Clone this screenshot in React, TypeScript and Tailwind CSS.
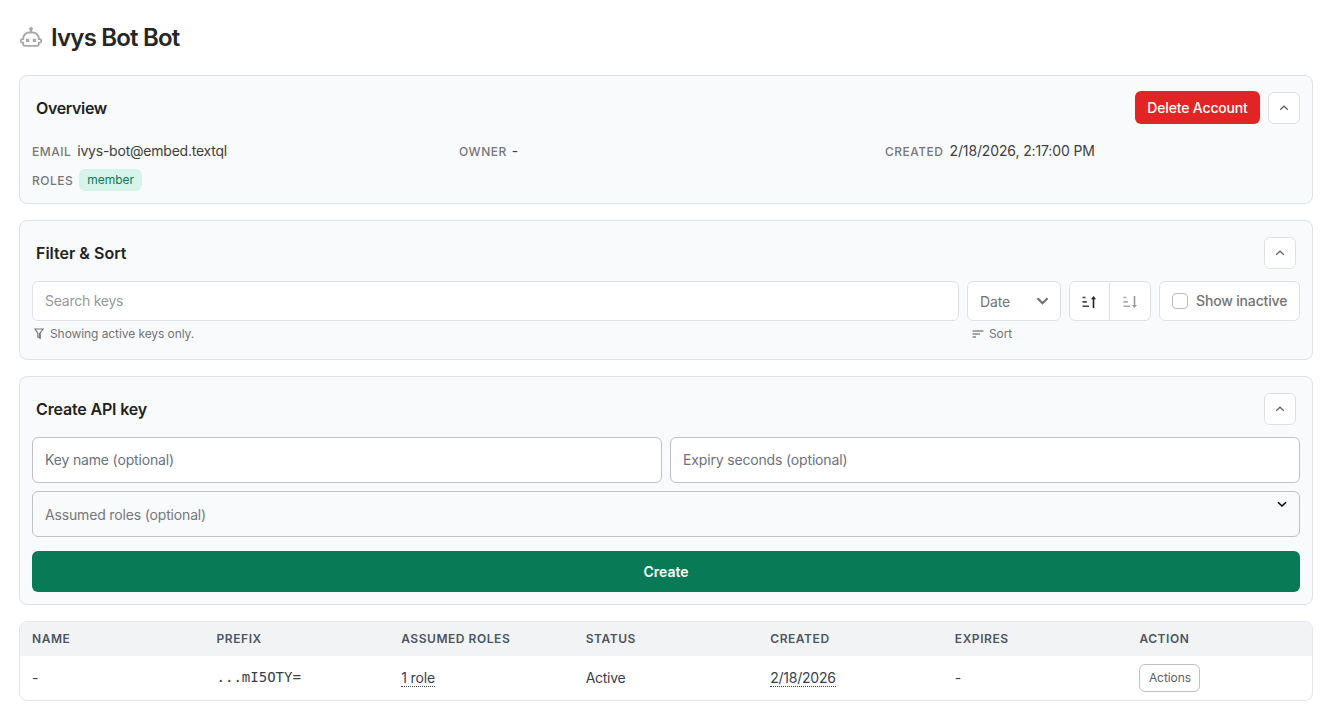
import type { ReactNode } from "react";
import { clsx } from "clsx";

function ChevronUp() {
  return (
    <svg width="10" height="6" viewBox="0 0 10 6" fill="none" stroke="#626262" strokeWidth="1.2">
      <path d="M1.2 4.8 5 1.2l3.8 3.6" />
    </svg>
  );
}

function RobotIcon() {
  return (
    <svg className="mb-0.5" width="22" height="20" viewBox="0 0 22 20" fill="none" stroke="#a8a8a8" strokeWidth="1.8" strokeLinejoin="round">
      <circle cx="11" cy="1.9" r="1.9" fill="#a8a8a8" stroke="none" />
      <path d="M11 2v4" />
      <path d="M9.2 5.5h3.6a6 6 0 0 1 6 6v.7h1.1c.7 0 1.2.5 1.2 1.1v1.2c0 .7-.5 1.2-1.2 1.2h-1.1v1.4c0 1-.8 1.8-1.8 1.8H5c-1 0-1.8-.8-1.8-1.8v-1.4H2.1c-.7 0-1.2-.5-1.2-1.2v-1.2c0-.6.5-1.1 1.2-1.1h1.1v-.7a6 6 0 0 1 6-6Z" />
      <path d="M6 13.4h3.2M12.8 13.4H16" strokeWidth="3.2" />
    </svg>
  );
}

function FunnelIcon() {
  return (
    <svg className="mb-0.5" width="10" height="11" viewBox="0 0 10 11" fill="none" stroke="#777" strokeWidth="1.2">
      <path d="M.9 1h8.2L6.2 5v5.2L3.8 8.8V5Z" />
      <path d="M5.5 5v4.6" />
    </svg>
  );
}

function SortIcon() {
  return (
    <svg width="12" height="8" viewBox="0 0 12 8" fill="none" stroke="#8a8a8a" strokeWidth="1.4">
      <path d="M.5 1h11M.5 4h7.5M.5 7h3.5" />
    </svg>
  );
}

function OrderIcon({ up }: { up?: boolean }) {
  return (
    <svg className="mt-px" width="14" height="12" viewBox="0 0 14 12" fill="none" stroke="currentColor" strokeWidth="1.6">
      <path d="M.5 1.5h3M.5 5.9h4.3M.5 10.3h6.5" strokeOpacity=".85" />
      {up ? <path d="M11.5 12V2" /> : <path d="M11.5 0v10.5" />}
      {up ? (
        <path d="M11.5 0 14 3.3H9z" fill="currentColor" stroke="none" />
      ) : (
        <path d="M11.5 12 14 9H9z" fill="currentColor" stroke="none" />
      )}
    </svg>
  );
}

function CollapseButton() {
  return (
    <button className="flex size-8 items-center justify-center rounded-md border border-[#dfe0e2] bg-white">
      <ChevronUp />
    </button>
  );
}

function Card({ className, children }: { className: string; children: ReactNode }) {
  return (
    <section className={clsx("rounded-lg border border-[#dfe1e3] bg-[#f9fafc] px-3", className)}>
      {children}
    </section>
  );
}

function CardHeader({ title }: { title: string }) {
  return (
    <div className="flex items-center justify-between px-1">
      <h2 className="text-base font-semibold text-[#222]">{title}</h2>
      <CollapseButton />
    </div>
  );
}

function Label({ children }: { children: ReactNode }) {
  return <span className="pt-px text-xs font-medium tracking-[0.5px] text-[#777]">{children}</span>;
}

function KeyTable() {
  const columns = ["NAME", "PREFIX", "ASSUMED ROLES", "STATUS", "CREATED", "EXPIRES", "ACTION"];
  return (
    <div className="h-20 overflow-hidden rounded-lg border border-[#e4e6e9]">
      <div className="grid h-[34px] grid-cols-7 items-center bg-[#f2f3f5] text-xs font-semibold tracking-[0.55px] text-[#4b5563]">
        {columns.map((c) => (
          <div key={c} className="px-3">{c}</div>
        ))}
      </div>
      <div className="grid h-11 grid-cols-7 items-center text-sm text-[#374151]">
        <div className="px-3">-</div>
        <div className="px-3 pb-0.5 font-['DejaVu_Sans_Mono',monospace] tracking-normal">...mI5OTY=</div>
        <div className="px-3">
          <span className="inline-block border-b border-dotted border-[#374151] leading-4 tracking-[-0.1px]">1 role</span>
        </div>
        <div className="px-3 tracking-[-0.3px]">Active</div>
        <div className="px-3">
          <span className="inline-block border-b border-dotted border-[#374151] leading-4 tracking-[-0.25px]">2/18/2026</span>
        </div>
        <div className="px-3">-</div>
        <div className="px-3">
          <button className="h-7 w-[61px] rounded-md border border-[#bfbfbf] text-xs tracking-[-0.08px] text-[#626262]">Actions</button>
        </div>
      </div>
    </div>
  );
}

export default function App() {
  return (
    <main className="flex h-[723px] flex-col gap-4 bg-white pr-[18px] pl-[19px] font-['Inter',sans-serif] text-sm tracking-[-0.16px] text-[#404040]">
      <header className="flex h-[59px] items-center gap-[9px] pt-4 pl-px">
        <RobotIcon />
        <h1 className="text-2xl font-semibold tracking-[-0.8px] text-[#262626]">Ivys Bot Bot</h1>
      </header>

      <Card className="h-[129px] pt-[15px]">
        <div className="flex items-center justify-between pl-1">
          <h2 className="text-base font-semibold tracking-[-0.35px] text-[#222]">Overview</h2>
          <div className="flex items-center gap-2">
            <button className="h-[33px] w-[125px] rounded-md bg-[#e12424] font-medium text-white">Delete Account</button>
            <CollapseButton />
          </div>
        </div>
        <div className="mt-[17px] grid grid-cols-[427px_426px_1fr]">
          <div className="flex items-center gap-1.5">
            <Label>EMAIL</Label>
            <span className="tracking-[-0.22px]">ivys-bot@embed.textql</span>
          </div>
          <div className="flex items-center gap-[5px]">
            <Label>OWNER</Label>
            <span>-</span>
          </div>
          <div className="flex items-center gap-1.5">
            <Label>CREATED</Label>
            <span className="tracking-[-0.13px]">2/18/2026, 2:17:00 PM</span>
          </div>
        </div>
        <div className="mt-2 flex items-center gap-1.5">
          <Label>ROLES</Label>
          <span className="flex h-[22px] items-center rounded-md bg-[#d6f4e9] px-2 text-xs tracking-normal text-[#087a55]">member</span>
        </div>
      </Card>

      <Card className="h-[140px] pt-4">
        <div className="tracking-normal">
          <CardHeader title="Filter &amp; Sort" />
        </div>
        <div className="mt-3 flex gap-2 text-[#737373]">
          <div className="flex-1">
            <input
              className="block h-10 w-full rounded-md border border-[#dfe1e3] bg-white px-3 pb-0.5 tracking-[-0.25px] placeholder:text-[#999]"
              placeholder="Search keys"
            />
            <div className="mt-[5px] flex items-center gap-1.5 pl-0.5 text-xs tracking-[-0.08px]">
              <FunnelIcon />
              Showing active keys only.
            </div>
          </div>
          <div className="w-[94px]">
            <div className="flex h-10 items-center justify-between rounded-md border border-[#dfe1e3] bg-white pr-[11px] pl-3">
              <span className="pt-0.5">Date</span>
              <svg width="13" height="8" viewBox="0 0 13 8" fill="none" stroke="#6b7280" strokeWidth="2.2">
                <path d="m1.5 1.2 5 5 5-5" />
              </svg>
            </div>
            <div className="mt-[5px] flex items-center gap-[5px] pl-[5px] text-xs tracking-[-0.08px]">
              <SortIcon />
              Sort
            </div>
          </div>
          <div className="flex h-10 w-[82px] rounded-md border border-[#dfe1e3] bg-white">
            <button className="flex w-[39px] items-center justify-center pr-px text-[#222]">
              <OrderIcon up />
            </button>
            <button className="flex flex-1 items-center justify-center border-l border-[#dfe1e3] pr-px text-[#999]">
              <OrderIcon />
            </button>
          </div>
          <label className="flex h-10 w-[141px] items-center gap-2 rounded-md border border-[#dfe1e3] bg-white pl-3 font-medium">
            <span className="size-4 rounded border border-[#bbb]" />
            Show inactive
          </label>
        </div>
      </Card>

      <Card className="h-[229px] pt-4">
        <CardHeader title="Create API key" />
        <div className="mt-3 grid grid-cols-2 gap-2">
          <input
            className="h-[46px] rounded-md border border-[#bfc1c4] bg-white px-3 pb-0.5 placeholder:text-[#6b7280]"
            placeholder="Key name (optional)"
          />
          <input
            className="h-[46px] rounded-md border border-[#bfc1c4] bg-white px-3 pb-0.5 placeholder:text-[#6b7280]"
            placeholder="Expiry seconds (optional)"
          />
        </div>
        <div className="mt-2 flex h-[46px] items-start justify-between rounded-md border border-[#bfc1c4] pr-3 pl-3 text-[#777]">
          <span className="mt-[13px]">Assumed roles (optional)</span>
          <svg className="mt-[9px]" width="10" height="7" viewBox="0 0 10 7" fill="none" stroke="#000" strokeWidth="1.5">
            <path d="M1 1.2 5 5l4-3.8" />
          </svg>
        </div>
        <button className="mt-3.5 h-[41px] w-full rounded-md bg-[#087a55] font-semibold tracking-normal text-white">Create</button>
      </Card>

      <KeyTable />
    </main>
  );
}
